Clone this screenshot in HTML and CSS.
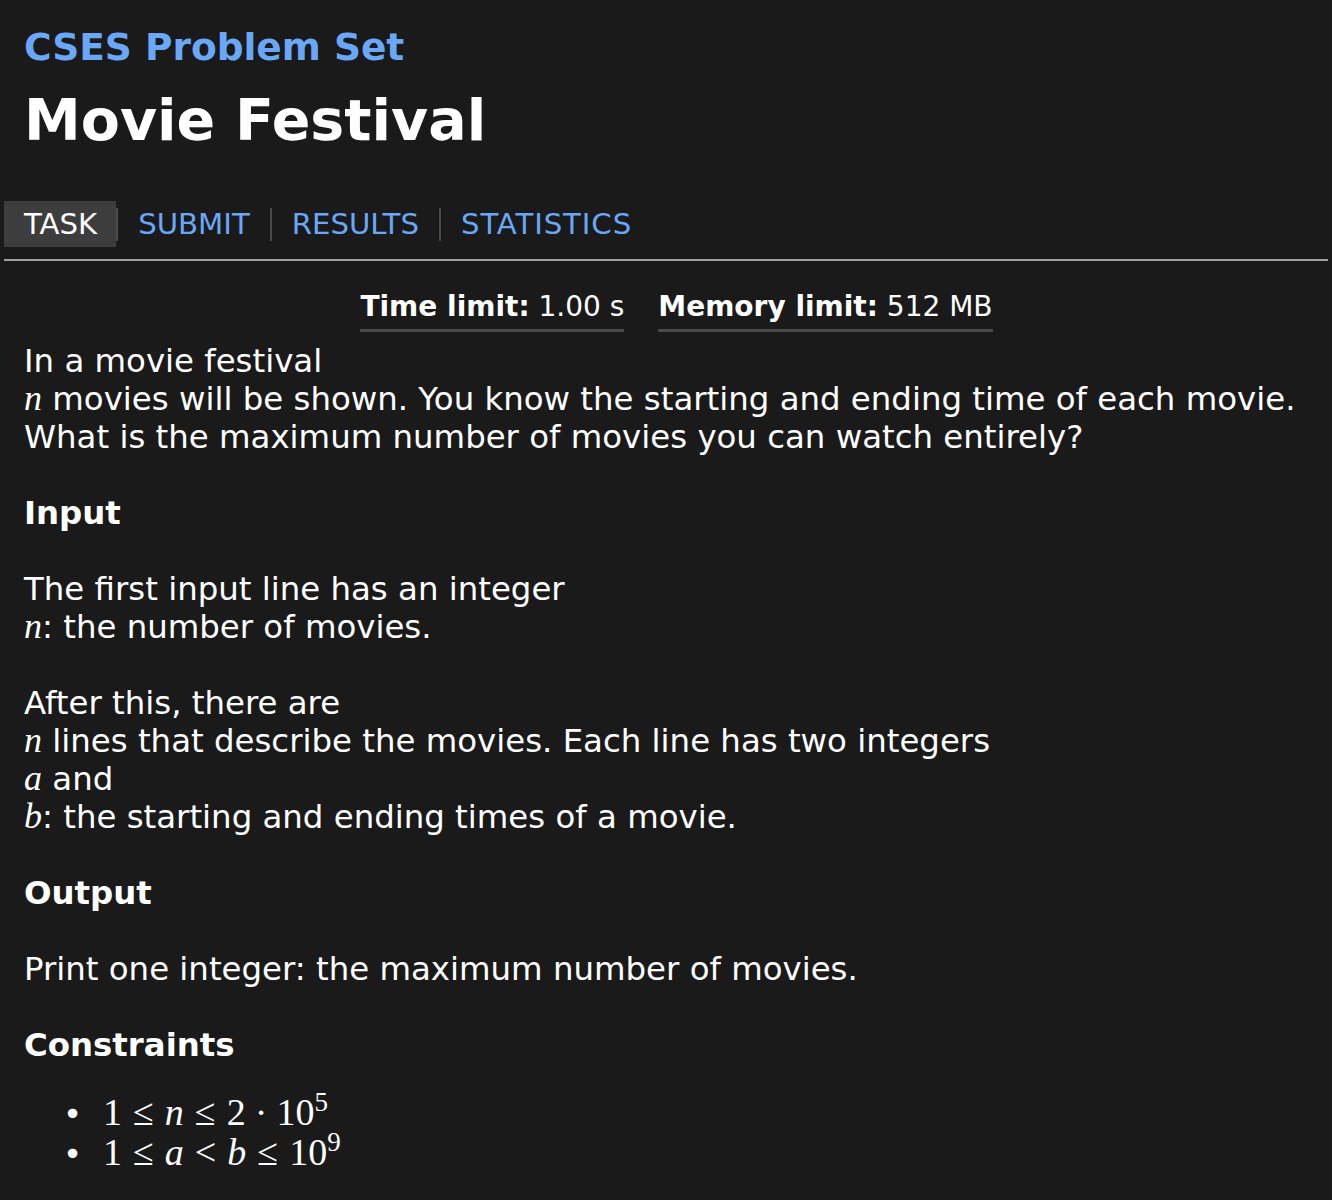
FILE: index.html
```html
<!DOCTYPE html>
<html>
<head>
<meta charset="utf-8">
<title>CSES - Movie Festival</title>
<link rel="stylesheet" href="styles.css">
</head>
<body>
<div class="header">
  <a class="site" href="#">CSES Problem Set</a>
  <h1 class="title">Movie Festival</h1>
</div>
<ul class="tabs">
  <li class="tabitem"><a class="tab current" href="#">TASK</a></li>
  <li class="tabitem"><a class="tab" href="#">SUBMIT</a></li>
  <li class="tabitem"><a class="tab" href="#">RESULTS</a></li>
  <li class="tabitem last"><a class="tab wide" href="#">STATISTICS</a></li>
</ul>
<div class="content">
  <ul class="limits">
    <li><b>Time limit:</b> 1.00 s</li>
    <li><b>Memory limit:</b> 512 MB</li>
  </ul>
  <div class="md">
    <p>In a movie festival<br><span class="m"><i>n</i></span> movies will be shown. You know the starting and ending time of each movie.<br>What is the maximum number of movies you can watch entirely?</p>
    <h2>Input</h2>
    <p>The first input line has an integer<br><span class="m"><i>n</i></span>: the number of movies.</p>
    <p>After this, there are<br><span class="m"><i>n</i></span> lines that describe the movies. Each line has two integers<br><span class="m"><i>a</i></span> and<br><span class="m"><i>b</i></span>: the starting and ending times of a movie.</p>
    <h2>Output</h2>
    <p>Print one integer: the maximum number of movies.</p>
    <h2>Constraints</h2>
    <ul class="cons">
      <li><span class="m big">1<span class="rel">≤</span><i>n</i><span class="rel">≤</span>2<span class="bin">·</span>10<sup>5</sup></span></li>
      <li><span class="m big">1<span class="rel">≤</span><i>a</i><span class="rel">&lt;</span><i>b</i><span class="rel">≤</span>10<sup>9</sup></span></li>
    </ul>
  </div>
</div>
</body>
</html>
```
FILE: styles.css
```css
html, body {
  margin: 0;
  padding: 0;
  background: #1a1a1a;
  color: #ffffff;
}
body {
  font-family: "DejaVu Sans", "Verdana", sans-serif;
  font-size: 32.4px;
  line-height: 38px;
  padding: 0 4px;
}
.header {
  padding: 22px 20px 0 20px;
}
.site {
  display: block;
  color: #6aa8f7;
  text-decoration: none;
  font-weight: bold;
  font-size: 37.5px;
  line-height: 50px;
}
.title {
  margin: 0;
  font-weight: bold;
  font-size: 57px;
  line-height: 96px;
}
.tabs {
  list-style: none;
  margin: 33px 0 0 0;
  padding: 0 0 12px 0;
  display: flex;
  align-items: center;
  border-bottom: 2px solid #a0a0a0;
}
.tabitem {
  display: flex;
  align-items: center;
}
.tabitem::after {
  content: "";
  display: block;
  width: 2px;
  height: 33px;
  background: #4a4a4a;
}
.tabitem.last::after {
  display: none;
}
.tab {
  color: #6aa8f7;
  text-decoration: none;
  font-size: 29.2px;
  line-height: 30px;
  padding: 0 20px;
}
.tab.wide {
  letter-spacing: 0.9px;
}
.tab.current {
  color: #ffffff;
  background: #3d3d3d;
  padding: 8px 19px 8px 20px;
}
.content {
  padding: 0 20px;
}
.limits {
  list-style: none;
  margin: 26px 0 10px 0;
  padding: 0 0 0 21px;
  display: flex;
  justify-content: center;
  gap: 34px;
  font-size: 28px;
}
.limits li {
  border-bottom: 3px solid #4a4a4a;
  line-height: 40px;
  padding-bottom: 2px;
}
.md p {
  margin: 0 0 38px 0;
}
.md h2 {
  font-size: 32.4px;
  line-height: 38px;
  margin: 0 0 38px 0;
  font-weight: bold;
}
.m {
  font-family: "Liberation Serif", "DejaVu Serif", serif;
  font-size: 36px;
  line-height: 0;
}
.m i {
  font-style: italic;
}
.m.big {
  font-size: 38px;
}
.rel {
  padding: 0 11px;
}
.bin {
  padding: 0 9px;
}
.m sup {
  font-size: 27px;
  line-height: 0;
  vertical-align: 14px;
}
.cons {
  list-style: none;
  margin: -8px 0 0 0;
  padding-left: 79px;
}
.cons li {
  line-height: 40px;
}
.cons li::before {
  content: "•";
  display: inline-block;
  width: 30px;
  margin-left: -40px;
  margin-right: 10px;
}
```
